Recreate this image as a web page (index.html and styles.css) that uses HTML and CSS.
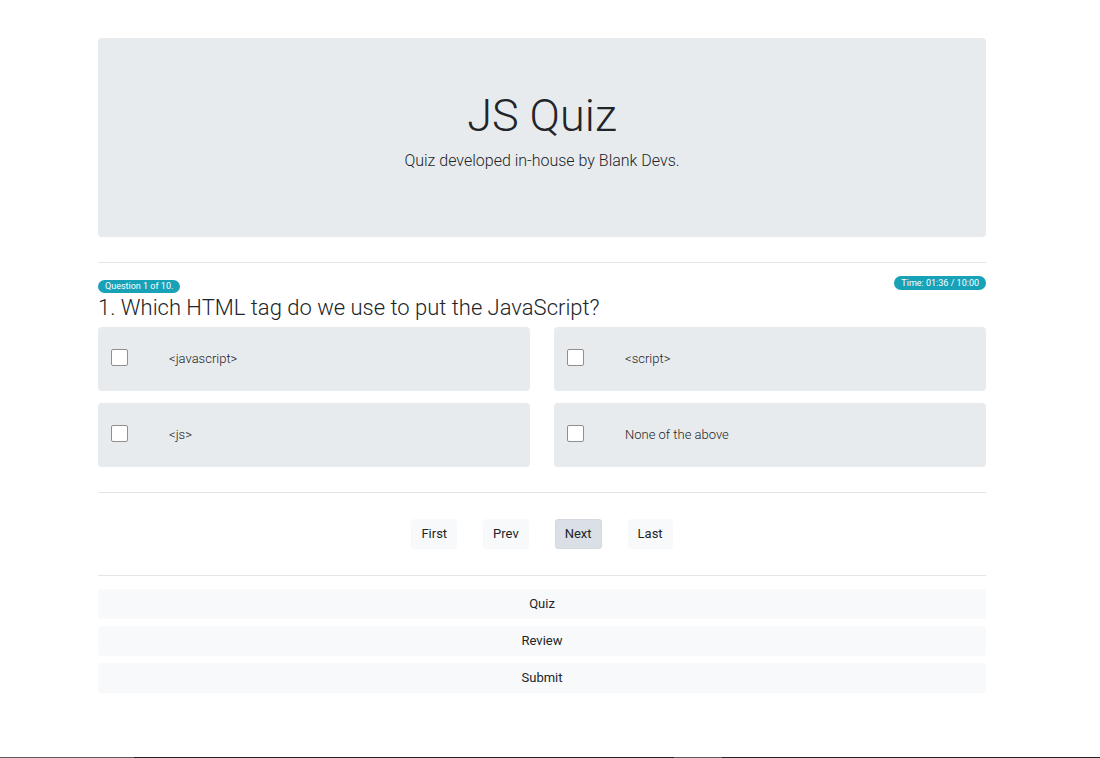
FILE: index.html
```html
<!DOCTYPE html>
<html lang="en">
<head>
<meta charset="utf-8">
<meta name="viewport" content="width=device-width, initial-scale=1">
<title>JS Quiz</title>
<link rel="stylesheet" href="styles.css">
</head>
<body class="page">
<main class="container">
  <header class="hero">
    <h1 class="hero-title">JS Quiz</h1>
    <p class="hero-text">Quiz developed in-house by Blank Devs.</p>
  </header>
  <hr class="rule">
  <section class="question">
    <div class="status">
      <span class="badge">Question 1 of 10.</span>
      <span class="badge badge-time">Time: 01:36 / 10:00</span>
    </div>
    <h2 class="question-title">1. Which HTML tag do we use to put the JavaScript?</h2>
    <div class="options">
      <label class="option"><input class="check" type="checkbox"><span>&lt;javascript&gt;</span></label>
      <label class="option"><input class="check" type="checkbox"><span>&lt;script&gt;</span></label>
      <label class="option"><input class="check" type="checkbox"><span>&lt;js&gt;</span></label>
      <label class="option"><input class="check" type="checkbox"><span>None of the above</span></label>
    </div>
  </section>
  <hr class="rule">
  <nav class="pager" aria-label="Questions">
    <button class="btn" type="button">First</button>
    <button class="btn" type="button">Prev</button>
    <button class="btn btn-active" type="button">Next</button>
    <button class="btn" type="button">Last</button>
  </nav>
  <hr class="rule">
  <div class="actions">
    <button class="btn" type="button">Quiz</button>
    <button class="btn" type="button">Review</button>
    <button class="btn" type="button">Submit</button>
  </div>
</main>
<footer class="strip">
  <span class="strip-start"></span>
  <span class="strip-fill"></span>
  <span class="strip-mid"></span>
</footer>
</body>
</html>
```
FILE: styles.css
```css
*, *::before, *::after { box-sizing: border-box; }

.page {
  margin: 0;
  min-height: 100vh;
  display: flex;
  flex-direction: column;
  background: #fff;
  color: #212529;
  font-family: Roboto, "Liberation Sans", sans-serif;
  font-size: 13px;
  font-weight: 300;
  line-height: 20px;
}

.container {
  flex: 1;
  width: 100%;
  padding: 38px 114px 38px 98px;
}

.hero {
  padding: 50px 26px 64px;
  border-radius: 4px;
  background: #e8ebee;
  text-align: center;
}

.hero-title {
  margin: 0 0 6px;
  font-size: 45px;
  font-weight: 300;
  line-height: 55px;
}

.hero-text {
  margin: 0;
  font-size: 16px;
  line-height: 24px;
}

.rule {
  height: 1px;
  margin: 25px 0 0;
  border: 0;
  background: #e5e5e5;
}

.question { padding-top: 13px; }

.status {
  display: flex;
  justify-content: space-between;
  align-items: flex-end;
}

.badge {
  padding: 0 7px;
  border-radius: 8px;
  background: #17a2b8;
  color: #fff;
  font-size: 9px;
  font-weight: 400;
  line-height: 13px;
}

.badge-time {
  margin-bottom: 3px;
  line-height: 14px;
}

.question-title {
  margin: 0 0 4px;
  font-size: 22px;
  font-weight: 300;
  line-height: 30px;
}

.options {
  display: grid;
  grid-template-columns: 1fr 1fr;
  gap: 12px 24px;
}

.option {
  display: flex;
  align-items: center;
  gap: 41px;
  padding: 22px 13px;
  border-radius: 4px;
  background: #e8ebee;
}

.check {
  appearance: none;
  width: 17px;
  height: 17px;
  margin: 0 0 3px;
  border: 1px solid #8f8f8f;
  border-radius: 2px;
  background: #fff;
}

.pager {
  display: flex;
  justify-content: center;
  gap: 26px;
  padding: 26px 0 1px;
}

.btn {
  padding: 4px 9px;
  border: 1px solid #f8f9fa;
  border-radius: 3px;
  background: #f8f9fa;
  color: #212529;
  font: inherit;
  font-weight: 400;
}

.btn-active {
  border-color: #d3d9df;
  background: #dae0e5;
}

.actions {
  display: grid;
  gap: 7px;
  padding-top: 13px;
}

.strip {
  display: flex;
  height: 1px;
  background: #222;
}

.strip-start {
  width: 134px;
  background: #5c5c5c;
}

.strip-fill { width: 540px; }

.strip-mid {
  width: 48px;
  background: #5c5c5c;
}
```
